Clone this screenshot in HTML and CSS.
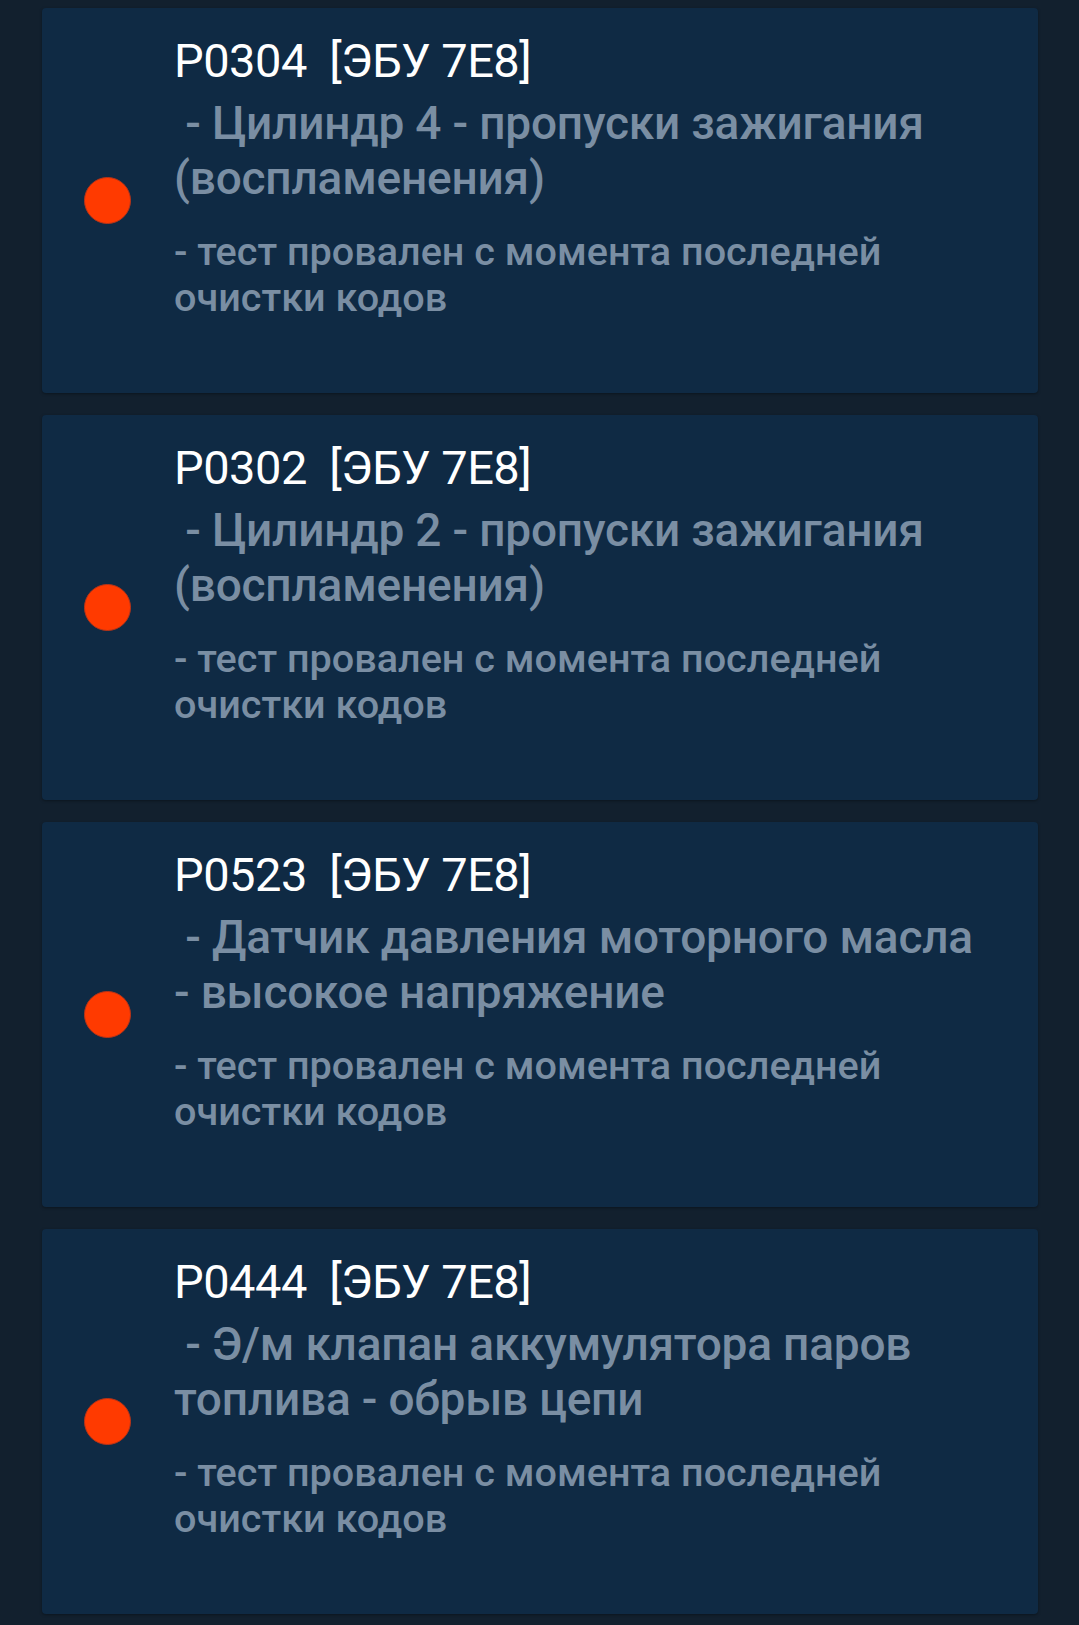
FILE: index.html
```html
<!DOCTYPE html>
<html lang="ru">
<head>
<meta charset="utf-8">
<link rel="stylesheet" href="styles.css">
</head>
<body>
<div class="list">
  <div class="card">
    <div class="dot"></div>
    <div class="text">
      <div class="title">P0304&nbsp; [ЭБУ 7E8]</div>
      <div class="desc">&nbsp;- Цилиндр 4 - пропуски зажигания (воспламенения)</div>
      <div class="status">- тест провален с момента последней очистки кодов</div>
    </div>
  </div>
  <div class="card">
    <div class="dot"></div>
    <div class="text">
      <div class="title">P0302&nbsp; [ЭБУ 7E8]</div>
      <div class="desc">&nbsp;- Цилиндр 2 - пропуски зажигания (воспламенения)</div>
      <div class="status">- тест провален с момента последней очистки кодов</div>
    </div>
  </div>
  <div class="card">
    <div class="dot"></div>
    <div class="text">
      <div class="title">P0523&nbsp; [ЭБУ 7E8]</div>
      <div class="desc">&nbsp;- Датчик давления моторного масла - высокое напряжение</div>
      <div class="status">- тест провален с момента последней очистки кодов</div>
    </div>
  </div>
  <div class="card">
    <div class="dot"></div>
    <div class="text">
      <div class="title">P0444&nbsp; [ЭБУ 7E8]</div>
      <div class="desc">&nbsp;- Э/м клапан аккумулятора паров топлива - обрыв цепи</div>
      <div class="status">- тест провален с момента последней очистки кодов</div>
    </div>
  </div>
</div>
</body>
</html>
```

FILE: styles.css
```css
html, body {
  margin: 0;
  padding: 0;
  background: #12202e;
  height: 100%;
}
body {
  font-family: Roboto, "Noto Sans", sans-serif;
}
.list {
  display: flex;
  flex-direction: column;
  gap: 22px;
  padding: 8px 41px 0 42px;
}
.card {
  display: flex;
  align-items: center;
  height: 385px;
  box-sizing: border-box;
  background: #0f2a44;
  border-radius: 4px;
  box-shadow: 0 1px 3px rgba(0, 0, 0, 0.35);
  padding-left: 42px;
  padding-right: 50px;
}
.dot {
  flex: none;
  width: 45px;
  height: 45px;
  border-radius: 50%;
  background: #ff3a00;
  border: 1px solid #b83418;
  margin-right: 43px;
}
.text {
  align-self: flex-start;
  padding-top: 25px;
}
.title {
  color: #ffffff;
  font-size: 47px;
  line-height: 55px;
  letter-spacing: -0.5px;
  white-space: pre;
}
.desc {
  color: #7a8ea3;
  font-size: 46px;
  font-weight: 500;
  line-height: 55px;
  letter-spacing: -0.2px;
  margin-top: 8px;
}
.status {
  color: #7a8ea3;
  font-size: 39.6px;
  font-weight: 500;
  line-height: 46px;
  margin-top: 23px;
}
```
